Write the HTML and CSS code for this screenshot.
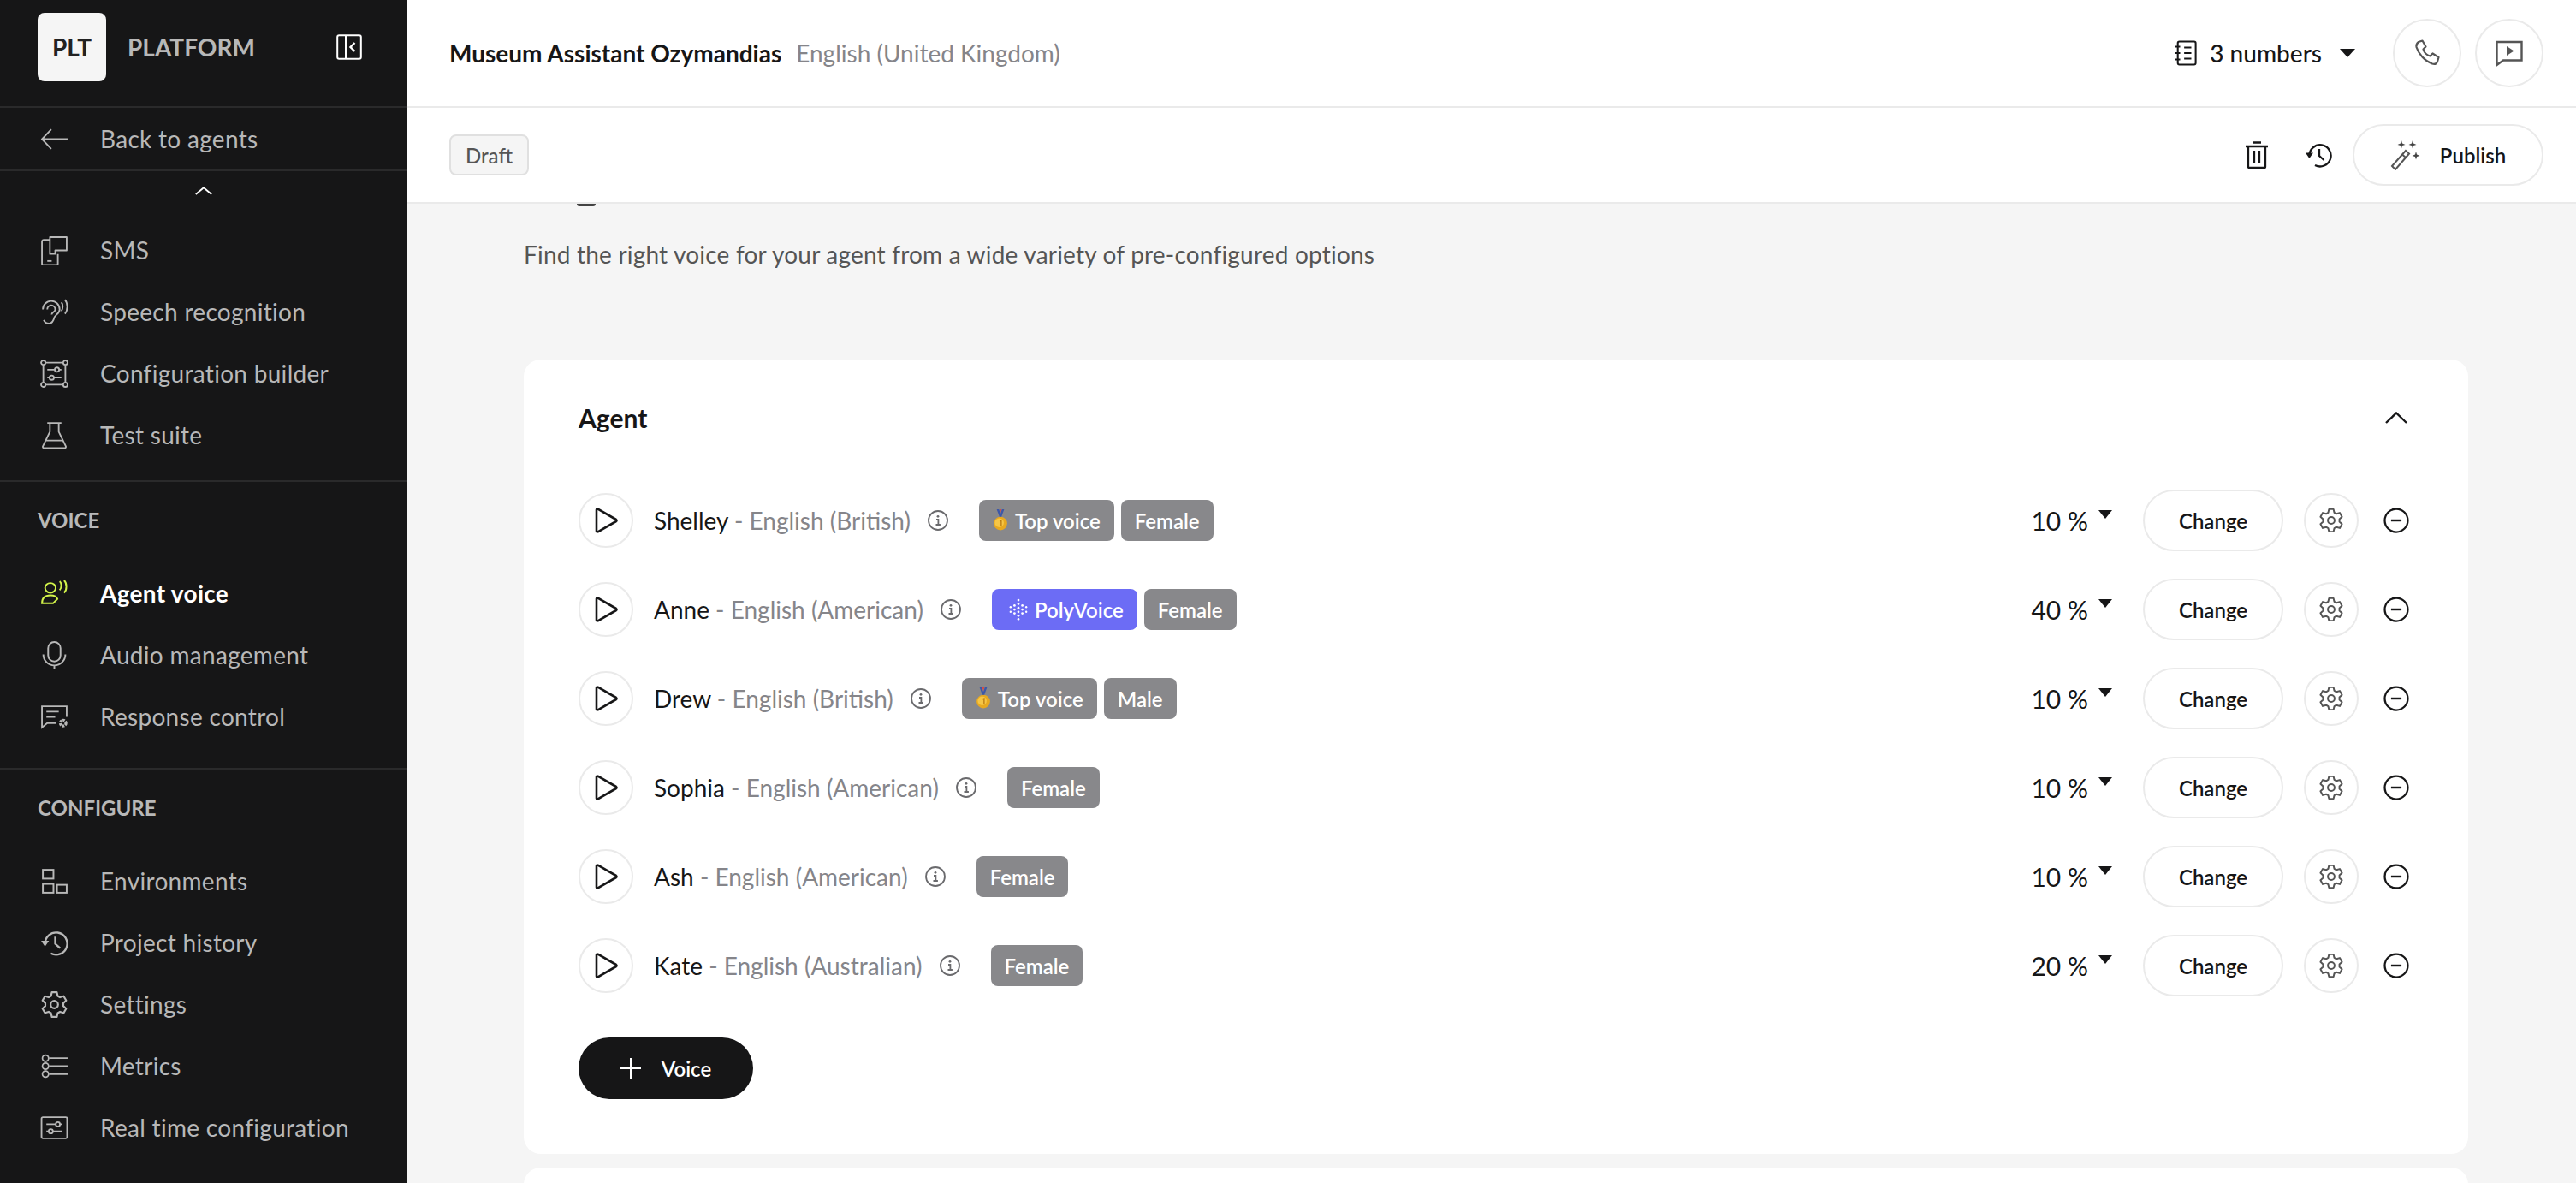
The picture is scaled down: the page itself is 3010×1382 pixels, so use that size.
FILE: index.html
```html
<!DOCTYPE html>
<html lang="en">
<head>
<meta charset="utf-8">
<title>Agent voice</title>
<link rel="stylesheet" href="styles.css">
</head>
<body>
<svg class="defs" width="0" height="0" aria-hidden="true">
  <defs>
    <symbol id="i-play" viewBox="0 0 32 32"><path d="M5 3.5v25a1 1 0 0 0 1.6.8L28 17a1.2 1.2 0 0 0 0-2L6.6 2.7A1 1 0 0 0 5 3.5z" fill="none" stroke="currentColor" stroke-width="2.6" stroke-linejoin="round"/></symbol>
    <symbol id="i-info" viewBox="0 0 24 24"><circle cx="12" cy="12" r="11" fill="none" stroke="currentColor" stroke-width="1.8"/><path d="M10 11h2.4v6M9.5 17h5.4" fill="none" stroke="currentColor" stroke-width="1.8"/><circle cx="12" cy="7.3" r="1.4" fill="currentColor"/></symbol>
    <symbol id="i-gear" viewBox="0 0 32 32"><path d="M13.2 2h5.6l1 4.3 2.6 1.5 4.2-1.3 2.8 4.9-3.2 3v3.2l3.2 3-2.8 4.9-4.2-1.3-2.6 1.5-1 4.3h-5.6l-1-4.3-2.6-1.5-4.2 1.3-2.8-4.9 3.2-3v-3.2l-3.2-3 2.8-4.9 4.2 1.3 2.6-1.5z" fill="none" stroke="currentColor" stroke-width="2.1" stroke-linejoin="round"/><circle cx="16" cy="16" r="4.2" fill="none" stroke="currentColor" stroke-width="2.1"/></symbol>
    <symbol id="i-minus" viewBox="0 0 32 32"><circle cx="16" cy="16" r="14.4" fill="none" stroke="currentColor" stroke-width="2.4"/><path d="M9.5 16h13" stroke="currentColor" stroke-width="2.6"/></symbol>
    <symbol id="i-history" viewBox="0 0 32 32"><path d="M5.4 17A12.6 12.6 0 1 1 12 27.9" fill="none" stroke="currentColor" stroke-width="2.3"/><path d="M1 13.5h9L5.4 20z" fill="currentColor"/><path d="M17 9v8l5.5 5" fill="none" stroke="currentColor" stroke-width="2.3"/></symbol>
    <symbol id="i-medal" viewBox="0 0 20 32"><path d="M5 1l4 11h2l4-11h-3l-2 6-2-6z" fill="#3c57a8"/><path d="M8.7 1l1.3 5 1.3-5z" fill="#e0453a"/><circle cx="10" cy="20" r="9" fill="#e8a91f"/><circle cx="8.5" cy="19" r="6" fill="#f6c646"/><path d="M9 17l2-1v8" fill="none" stroke="#b97a10" stroke-width="1.5"/></symbol>
    <symbol id="i-poly" viewBox="0 0 24 28" ><g fill="#fff"><circle cx="12" cy="2" r="1.5"/><circle cx="12" cy="7" r="1.5"/><circle cx="12" cy="12" r="1.5"/><circle cx="12" cy="17" r="1.5"/><circle cx="12" cy="22" r="1.5"/><circle cx="12" cy="26.5" r="1.5"/><circle cx="7" cy="9" r="1.5"/><circle cx="7" cy="14" r="1.5"/><circle cx="7" cy="19" r="1.5"/><circle cx="17" cy="9" r="1.5"/><circle cx="17" cy="14" r="1.5"/><circle cx="17" cy="19" r="1.5"/><circle cx="2" cy="11" r="1.3"/><circle cx="2" cy="17" r="1.3"/><circle cx="22" cy="11" r="1.3"/><circle cx="22" cy="17" r="1.3"/></g></symbol>
  </defs>
</svg>
<div class="app">
  <aside class="sidebar">
    <div class="brand">
      <div class="logo">PLT</div>
      <span class="brand-name">PLATFORM</span>
      <svg class="collapse" viewBox="0 0 30 30"><rect x="1.2" y="1.2" width="27.6" height="27.6" rx="2" fill="none" stroke="#fff" stroke-width="2"/><path d="M11 1v28" stroke="#fff" stroke-width="2"/><path d="M21.5 10l-5 5 5 5" fill="none" stroke="#fff" stroke-width="2.4"/></svg>
    </div>
    <a class="nav-item back">
      <svg class="nav-icon" viewBox="0 0 32 32"><path d="M31 16H2M12.5 5L2 16l10.5 11" fill="none" stroke="currentColor" stroke-width="1.8"/></svg>
      <span>Back to agents</span>
    </a>
    <div class="scroll-up"><svg viewBox="0 0 20 10" class="chev"><path d="M.8 9L10 1.2 19.2 9" fill="none" stroke="#fff" stroke-width="1.8"/></svg></div>
    <nav class="group first">
      <a class="nav-item"><svg class="nav-icon" viewBox="0 0 32 32"><path d="M11 4H4a2 2 0 0 0-2 2v25a1.5 1.5 0 0 0 1.5 1.5h15A1.5 1.5 0 0 0 20 31V20" fill="none" stroke="currentColor" stroke-width="1.8"/><path d="M11 1h19v15H17v4h-6z" fill="none" stroke="currentColor" stroke-width="1.8" stroke-linejoin="round"/><path d="M8 28h5" stroke="currentColor" stroke-width="1.8"/></svg><span>SMS</span></a>
      <a class="nav-item"><svg class="nav-icon" viewBox="0 0 32 32"><path d="M3 13a9.5 9.5 0 0 1 19 0c0 5-5 6-6 9-1 4-3 7-6 7-3 0-5-1.500-6-4" fill="none" stroke="currentColor" stroke-width="1.8"/><path d="M8 13a4.500 4.500 0 0 1 9 0c0 3-4 3-4 6" fill="none" stroke="currentColor" stroke-width="1.8"/><path d="M24 5c2 2.500 2 7 0 10M28 2c3.500 4 3.500 12 0 16" fill="none" stroke="currentColor" stroke-width="1.8"/></svg><span>Speech recognition</span></a>
      <a class="nav-item"><svg class="nav-icon" viewBox="0 0 32 32"><g fill="none" stroke="currentColor" stroke-width="1.8"><circle cx="3.500" cy="3.500" r="2.500"/><circle cx="28.500" cy="3.500" r="2.500"/><circle cx="3.500" cy="28.500" r="2.500"/><circle cx="28.500" cy="28.500" r="2.500"/><path d="M6 3.500h20M6 28.500h20M3.500 6v20M28.500 6v20M8 11.500h16M8 20.500h16"/><circle cx="19" cy="11.500" r="2.500" fill="#161617"/><circle cx="13" cy="20.500" r="2.500" fill="#161617"/></g></svg><span>Configuration builder</span></a>
      <a class="nav-item"><svg class="nav-icon" viewBox="0 0 32 32"><path d="M11 2v10L3 28.500a1.500 1.500 0 0 0 1.500 2h23a1.500 1.500 0 0 0 1.500-2L21 12V2M8 2h16M6.500 22h19" fill="none" stroke="currentColor" stroke-width="1.8" stroke-linejoin="round"/></svg><span>Test suite</span></a>
    </nav>
    <nav class="group">
      <h3 class="group-title">VOICE</h3>
      <a class="nav-item active"><svg class="nav-icon" viewBox="0 0 32 32"><g fill="none" stroke="#d2f34a" stroke-width="1.900"><ellipse cx="11.500" cy="9.500" rx="6" ry="5.500"/><path d="M2 27c0-6 3-9 9.500-9 4 0 7 1 8 4l-5 5z"/><path d="M22 2c2.500 2 2.500 7.500 0 10M27 1c3.500 3 3.500 11 0 14"/></g></svg><span>Agent voice</span></a>
      <a class="nav-item"><svg class="nav-icon" viewBox="0 0 32 32"><g fill="none" stroke="currentColor" stroke-width="1.900"><rect x="9" y="1" width="14" height="22" rx="7"/><path d="M3.500 15a12.500 12.500 0 0 0 25 0M16 27.500v4"/></g></svg><span>Audio management</span></a>
      <a class="nav-item"><svg class="nav-icon" viewBox="0 0 32 32"><path d="M30 16V4H2v24l6-5h10M7 10h14M7 16h10" fill="none" stroke="currentColor" stroke-width="1.800"/><circle cx="26" cy="23" r="3.200" fill="none" stroke="currentColor" stroke-width="3.200" stroke-dasharray="2.500 1"/></svg><span>Response control</span></a>
    </nav>
    <nav class="group">
      <h3 class="group-title">CONFIGURE</h3>
      <a class="nav-item"><svg class="nav-icon" viewBox="0 0 32 32"><g fill="none" stroke="currentColor" stroke-width="1.900"><rect x="3" y="3" width="12" height="10"/><rect x="3" y="19" width="12" height="10"/><rect x="19" y="20" width="11" height="9"/></g></svg><span>Environments</span></a>
      <a class="nav-item"><svg class="nav-icon" viewBox="0 0 32 32"><use href="#i-history"/></svg><span>Project history</span></a>
      <a class="nav-item"><svg class="nav-icon" viewBox="0 0 32 32"><use href="#i-gear"/></svg><span>Settings</span></a>
      <a class="nav-item"><svg class="nav-icon" viewBox="0 0 32 32"><g fill="none" stroke="currentColor" stroke-width="1.700"><circle cx="6" cy="7" r="3.500"/><circle cx="6" cy="16" r="3.500"/><circle cx="6" cy="25" r="3.500"/><path d="M10 7h21M10 16h21M10 25h21"/></g></svg><span>Metrics</span></a>
      <a class="nav-item"><svg class="nav-icon" viewBox="0 0 32 32"><g fill="none" stroke="currentColor" stroke-width="1.800"><rect x="1.500" y="4" width="29" height="24" rx="1.500"/><path d="M7 12h18M7 20h18"/><circle cx="20" cy="12" r="2.400" fill="#161617"/><circle cx="12" cy="20" r="2.400" fill="#161617"/></g></svg><span>Real time configuration</span></a>
    </nav>
  </aside>
  <main class="main">
    <header class="topbar">
      <div class="agent-title"><strong>Museum Assistant Ozymandias</strong><span>English (United Kingdom)</span></div>
      <div class="top-actions">
        <div class="numbers">
          <svg class="num-icon" viewBox="0 0 28 32"><g fill="none" stroke="currentColor" stroke-width="2.200"><rect x="4" y="1.500" width="22.500" height="29" rx="2"/><path d="M1 8h6M1 16h6M1 24h6M12 9h9M12 16h9M12 23h9"/></g></svg>
          <span>3 numbers</span>
          <i class="caret"></i>
        </div>
        <button class="round-btn big"><svg viewBox="0 0 32 32"><path d="M6 3l4.500-1.500 4 7-3 3c1 3.500 4 7 8 8l3-3 7 4.500L28 26c-1 2.500-3 3.500-6 2.500C13 25 6 17 3.500 9 3 6.500 4 4.500 6 3z" fill="none" stroke="#555" stroke-width="2.200" stroke-linejoin="round"/></svg></button>
        <button class="round-btn big"><svg viewBox="0 0 32 32"><path d="M1.500 3h29v21.500H9L1.500 30z" fill="none" stroke="#555" stroke-width="2.400"/><path d="M13 8v11l8.500-5.500z" fill="#555"/></svg></button>
      </div>
    </header>
    <div class="toolbar">
      <span class="draft">Draft</span>
      <div class="tool-actions">
        <svg class="tool-icon trash" viewBox="0 0 28 32"><path d="M1 6h26M9 1.500h10M4 6v24a1 1 0 0 0 1 1h18a1 1 0 0 0 1-1V6M11 11v14M17 11v14" fill="none" stroke="currentColor" stroke-width="2.300"/></svg>
        <svg class="tool-icon history" viewBox="0 0 32 32"><use href="#i-history"/></svg>
        <button class="pill publish">
          <svg class="wand" viewBox="0 0 36 36"><path d="M2 31l16-18 4 3.500L6 35z" fill="none" stroke="#555" stroke-width="2"/><path d="M14 17.500l4 3.500" stroke="#555" stroke-width="2"/><path d="M13 1l1 3.500L17.500 6 14 7l-1 3.500L12 7 8.500 6 12 4.500zM26 1l1 3.500L30.500 6 27 7l-1 3.500L25 7 21.500 6 25 4.500zM30 14l1 3.500 3.500 1.500-3.500 1-1 3.500-1-3.500-3.500-1 3.500-1.500z" fill="#444"/></svg>
          <span>Publish</span>
        </button>
      </div>
    </div>
    <div class="content">
      <i class="clipped-heading"></i>
      <p class="lead">Find the right voice for your agent from a wide variety of pre-configured options</p>
      <section class="card">
        <div class="card-head">
          <h2>Agent</h2>
          <span class="icon-box"><svg class="chev-up" viewBox="0 0 26 14"><path d="M1 13L13 1.500 25 13" fill="none" stroke="currentColor" stroke-width="2.400"/></svg></span>
        </div>
        <div class="voice-row">
          <button class="round-btn play"><svg viewBox="0 0 32 32"><use href="#i-play"/></svg></button>
          <span class="voice-name">Shelley <em>- English (British)</em></span>
          <svg class="info" viewBox="0 0 24 24"><use href="#i-info"/></svg>
          <div class="tags"><span class="tag"><svg class="medal" viewBox="0 0 20 32"><use href="#i-medal"/></svg>Top voice</span><span class="tag">Female</span></div>
          <div class="row-right"><span class="pct">10 %<i class="caret small"></i></span><button class="pill change">Change</button><button class="round-btn gear"><svg viewBox="0 0 32 32"><use href="#i-gear"/></svg></button><span class="icon-box"><svg class="minus" viewBox="0 0 32 32"><use href="#i-minus"/></svg></span></div>
        </div>
        <div class="voice-row">
          <button class="round-btn play"><svg viewBox="0 0 32 32"><use href="#i-play"/></svg></button>
          <span class="voice-name">Anne <em>- English (American)</em></span>
          <svg class="info" viewBox="0 0 24 24"><use href="#i-info"/></svg>
          <div class="tags"><span class="tag purple"><svg class="poly" viewBox="0 0 24 28"><use href="#i-poly"/></svg>PolyVoice</span><span class="tag">Female</span></div>
          <div class="row-right"><span class="pct">40 %<i class="caret small"></i></span><button class="pill change">Change</button><button class="round-btn gear"><svg viewBox="0 0 32 32"><use href="#i-gear"/></svg></button><span class="icon-box"><svg class="minus" viewBox="0 0 32 32"><use href="#i-minus"/></svg></span></div>
        </div>
        <div class="voice-row">
          <button class="round-btn play"><svg viewBox="0 0 32 32"><use href="#i-play"/></svg></button>
          <span class="voice-name">Drew <em>- English (British)</em></span>
          <svg class="info" viewBox="0 0 24 24"><use href="#i-info"/></svg>
          <div class="tags"><span class="tag"><svg class="medal" viewBox="0 0 20 32"><use href="#i-medal"/></svg>Top voice</span><span class="tag">Male</span></div>
          <div class="row-right"><span class="pct">10 %<i class="caret small"></i></span><button class="pill change">Change</button><button class="round-btn gear"><svg viewBox="0 0 32 32"><use href="#i-gear"/></svg></button><span class="icon-box"><svg class="minus" viewBox="0 0 32 32"><use href="#i-minus"/></svg></span></div>
        </div>
        <div class="voice-row">
          <button class="round-btn play"><svg viewBox="0 0 32 32"><use href="#i-play"/></svg></button>
          <span class="voice-name">Sophia <em>- English (American)</em></span>
          <svg class="info" viewBox="0 0 24 24"><use href="#i-info"/></svg>
          <div class="tags"><span class="tag">Female</span></div>
          <div class="row-right"><span class="pct">10 %<i class="caret small"></i></span><button class="pill change">Change</button><button class="round-btn gear"><svg viewBox="0 0 32 32"><use href="#i-gear"/></svg></button><span class="icon-box"><svg class="minus" viewBox="0 0 32 32"><use href="#i-minus"/></svg></span></div>
        </div>
        <div class="voice-row">
          <button class="round-btn play"><svg viewBox="0 0 32 32"><use href="#i-play"/></svg></button>
          <span class="voice-name">Ash <em>- English (American)</em></span>
          <svg class="info" viewBox="0 0 24 24"><use href="#i-info"/></svg>
          <div class="tags"><span class="tag">Female</span></div>
          <div class="row-right"><span class="pct">10 %<i class="caret small"></i></span><button class="pill change">Change</button><button class="round-btn gear"><svg viewBox="0 0 32 32"><use href="#i-gear"/></svg></button><span class="icon-box"><svg class="minus" viewBox="0 0 32 32"><use href="#i-minus"/></svg></span></div>
        </div>
        <div class="voice-row">
          <button class="round-btn play"><svg viewBox="0 0 32 32"><use href="#i-play"/></svg></button>
          <span class="voice-name">Kate <em>- English (Australian)</em></span>
          <svg class="info" viewBox="0 0 24 24"><use href="#i-info"/></svg>
          <div class="tags"><span class="tag">Female</span></div>
          <div class="row-right"><span class="pct">20 %<i class="caret small"></i></span><button class="pill change">Change</button><button class="round-btn gear"><svg viewBox="0 0 32 32"><use href="#i-gear"/></svg></button><span class="icon-box"><svg class="minus" viewBox="0 0 32 32"><use href="#i-minus"/></svg></span></div>
        </div>
        <button class="pill add-voice"><svg viewBox="0 0 24 24"><path d="M12 0v24M0 12h24" stroke="#fff" stroke-width="2"/></svg><span>Voice</span></button>
      </section>
      <section class="card next"></section>
    </div>
  </main>
</div>
</body>
</html>
```

FILE: styles.css
```css
* { box-sizing: border-box; }
html, body { margin: 0; height: 100%; overflow: hidden; }
body { font-family: "Lato", "Open Sans", sans-serif; color: #161617; background: #f5f5f5; }
.defs { position: absolute; }
a { display: flex; }
button { font-family: inherit; background: #fff; cursor: pointer; padding: 0; }
svg { display: block; flex: none; }

.app { display: flex; width: 3010px; height: 1382px; overflow: hidden; }

.sidebar { width: 476px; flex: none; height: 100%; background: #161617; color: #b8b8b8; overflow: hidden; }
.brand { display: flex; align-items: center; height: 126px; padding: 0 53px 16px 44px; border-bottom: 2px solid #2a2a2b; padding-top: 15px; padding-bottom: 0; align-items: flex-start; }
.logo { width: 80px; height: 80px; background: #f5f5f5; border-radius: 8px; color: #222; font-size: 28px; font-weight: 700; display: flex; align-items: center; justify-content: center; }
.brand-name { margin-left: 25px; font-size: 28px; font-weight: 700; line-height: 80px; color: #b8b8b8; }
.collapse { width: 30px; height: 30px; margin-left: auto; margin-top: 25px; }
.nav-item { height: 72px; padding-left: 47px; align-items: center; gap: 37px; font-size: 28px; letter-spacing: .3px; white-space: nowrap; }
.nav-icon { width: 33px; height: 33px; }
.back { border-bottom: 2px solid #2a2a2b; height: 74px; }
.scroll-up { height: 56px; display: flex; justify-content: center; padding-top: 18px; }
.chev { width: 20px; height: 10px; }
.group { border-bottom: 2px solid #2a2a2b; padding-bottom: 24px; }
.group:last-child { border-bottom: 0; }
.group.first { padding-top: 0; height: 307px; padding-bottom: 0; padding-top: 0; }
.group-title { margin: 0; font-size: 24px; font-weight: 700; height: 94px; padding: 30px 0 0 44px; line-height: 30px; color: #b8b8b8; }
.nav-item.active { color: #fff; font-weight: 700; }

.main { flex: 1; min-width: 0; display: flex; flex-direction: column; }
.topbar { height: 126px; flex: none; background: #fff; border-bottom: 2px solid #eaeaea; display: flex; align-items: center; justify-content: space-between; padding: 0 38px 0 49px; }
.agent-title { display: flex; gap: 17px; font-size: 28px; }
.agent-title strong { font-weight: 700; }
.agent-title span { color: #85858a; }
.top-actions { display: flex; align-items: center; }
.numbers { display: flex; align-items: center; font-size: 28px; font-weight: 500; margin-right: 44px; }
.num-icon { width: 26px; height: 30px; margin-right: 15px; }
.caret { display: inline-block; width: 0; height: 0; border-left: 9px solid transparent; border-right: 9px solid transparent; border-top: 10px solid #161617; margin-left: 21px; }
.round-btn { display: flex; align-items: center; justify-content: center; border: 2px solid #eaeaea; border-radius: 50%; color: #161617; }
.round-btn.big { width: 80px; height: 80px; }
.round-btn.big + .round-btn.big { margin-left: 16px; }
.round-btn.big svg { width: 32px; height: 32px; }

.toolbar { height: 112px; flex: none; background: #fff; border-bottom: 2px solid #eaeaea; display: flex; align-items: center; justify-content: space-between; padding: 0 38px 0 49px; }
.draft { height: 48px; padding: 0 17px; display: flex; align-items: center; background: #f5f5f5; border: 2px solid #e0e0e0; border-radius: 8px; font-size: 24px; font-weight: 500; color: #555; }
.tool-actions { display: flex; align-items: center; }
.tool-icon { color: #161617; }
.trash { width: 28px; height: 32px; margin-right: 42px; }
.history { width: 32px; height: 32px; margin-right: 24px; }
.pill { display: flex; align-items: center; justify-content: center; border: 2px solid #eaeaea; border-radius: 36px; height: 72px; font-size: 24px; font-weight: 600; color: #161617; }
.publish { width: 223px; gap: 22px; }
.wand { width: 36px; height: 36px; }

.content { flex: 1; min-height: 0; padding: 0 126px 0 136px; position: relative; overflow: hidden; }
.clipped-heading { position: absolute; left: 198px; top: 0; width: 22px; height: 3px; background: #444; border-radius: 0 0 12px 12px; }
.lead { margin: 0; padding-top: 42px; height: 182px; font-size: 28px; line-height: 34px; color: #555; letter-spacing: .2px; }

.card { background: #fff; border-radius: 20px; padding: 0 64px 64px; }
.card.next { margin-top: 16px; height: 200px; }
.card-head { height: 136px; display: flex; align-items: center; justify-content: space-between; }
.card-head h2 { margin: 0; font-size: 30px; font-weight: 700; }
.icon-box { width: 40px; height: 40px; display: flex; align-items: center; justify-content: center; }
.chev-up { width: 26px; height: 14px; }
.voice-row { display: flex; align-items: center; height: 104px; }
.play { width: 64px; height: 64px; margin-right: 24px; }
.play svg { width: 32px; height: 32px; }
.voice-name { font-size: 28px; white-space: nowrap; }
.voice-name em { font-style: normal; color: #85858a; }
.info { width: 24px; height: 24px; margin: 0 36px 0 20px; color: #6a6a6d; }
.tags { display: flex; gap: 8px; }
.tag { height: 48px; padding: 0 16px; display: flex; align-items: center; gap: 8px; background: #88888b; color: #fff; border-radius: 8px; font-size: 24px; font-weight: 600; white-space: nowrap; }
.tag.purple { background: #6c6cf5; padding: 0 16px 0 20px; }
.medal { width: 18px; height: 28px; }
.poly { width: 22px; height: 28px; }
.row-right { margin-left: auto; display: flex; align-items: center; }
.pct { font-size: 30px; display: flex; align-items: flex-start; margin-right: 36px; }
.caret.small { margin: 6px 0 0 12px; border-left-width: 8px; border-right-width: 8px; }
.change { width: 164px; margin-right: 24px; }
.gear { width: 64px; height: 64px; margin-right: 24px; color: #555; }
.gear svg { width: 30px; height: 32px; }
.minus { width: 30px; height: 30px; }
.add-voice { margin-top: 32px; width: 204px; height: 72px; background: #161617; border: 0; color: #fff; gap: 24px; }
.add-voice svg { width: 24px; height: 24px; }
```
